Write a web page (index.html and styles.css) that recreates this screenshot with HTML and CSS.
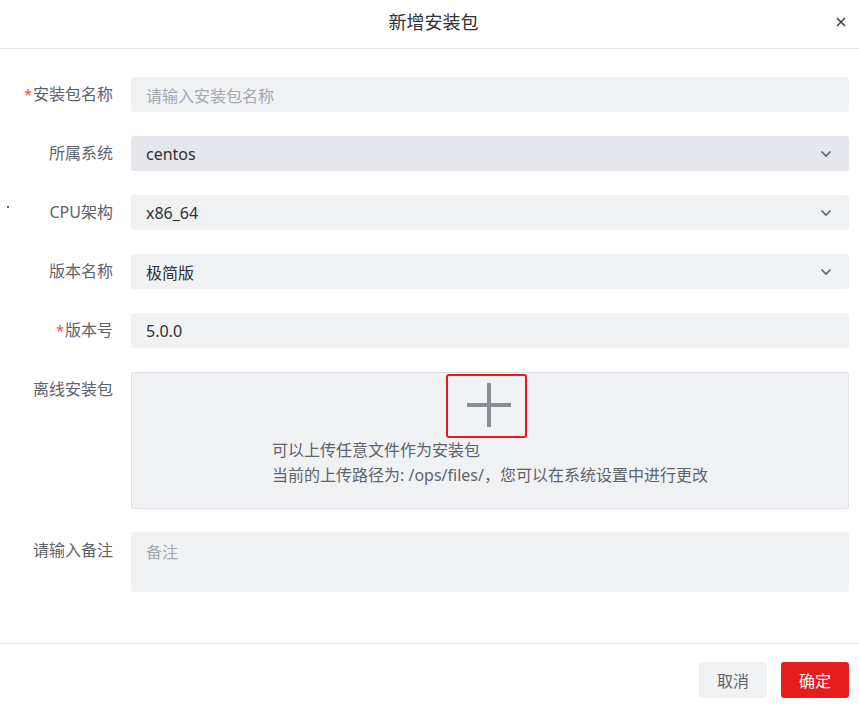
FILE: index.html
```html
<!DOCTYPE html>
<html lang="zh">
<head>
<meta charset="utf-8">
<link rel="stylesheet" href="styles.css">
</head>
<body>
<div class="dialog">
  <div class="header">
    <div class="title">新增安装包</div>
    <button class="close" aria-label="关闭">
      <svg width="10" height="10" viewBox="0 0 10 10"><path d="M1 1L9 9M9 1L1 9" stroke="#3a3d44" stroke-width="1.5" fill="none"/></svg>
    </button>
  </div>
  <div class="body">
    <span class="stray-dot"></span>
    <div class="row">
      <label class="label"><span class="req">*</span>安装包名称</label>
      <div class="field placeholder">请输入安装包名称</div>
    </div>
    <div class="row">
      <label class="label">所属系统</label>
      <div class="field select active">centos<svg class="chev" width="12" height="8" viewBox="0 0 12 8"><path d="M1.5 1.5L6 6L10.5 1.5" stroke="#5b6270" stroke-width="1.6" fill="none"/></svg></div>
    </div>
    <div class="row">
      <label class="label">CPU架构</label>
      <div class="field select">x86_64<svg class="chev" width="12" height="8" viewBox="0 0 12 8"><path d="M1.5 1.5L6 6L10.5 1.5" stroke="#5b6270" stroke-width="1.6" fill="none"/></svg></div>
    </div>
    <div class="row">
      <label class="label">版本名称</label>
      <div class="field select">极简版<svg class="chev" width="12" height="8" viewBox="0 0 12 8"><path d="M1.5 1.5L6 6L10.5 1.5" stroke="#5b6270" stroke-width="1.6" fill="none"/></svg></div>
    </div>
    <div class="row">
      <label class="label"><span class="req">*</span>版本号</label>
      <div class="field">5.0.0</div>
    </div>
    <div class="row row-upload">
      <label class="label">离线安装包</label>
      <div class="upload">
        <div class="plus-box">
          <svg width="46" height="46" viewBox="0 0 46 46"><path d="M23 1V45M1 23H45" stroke="#868e9a" stroke-width="4" fill="none"/></svg>
        </div>
        <div class="tip">
          <div>可以上传任意文件作为安装包</div>
          <div>当前的上传路径为: /ops/files/，您可以在系统设置中进行更改</div>
        </div>
      </div>
    </div>
    <div class="row row-remark">
      <label class="label">请输入备注</label>
      <div class="field textarea placeholder">备注</div>
    </div>
  </div>
  <div class="footer">
    <button class="btn btn-cancel">取消</button>
    <button class="btn btn-ok">确定</button>
  </div>
</div>
</body>
</html>
```

FILE: styles.css
```css
* { box-sizing: border-box; }
html, body {
  margin: 0;
  padding: 0;
  background: #ffffff;
}
body {
  font-family: "Noto Sans", "Noto Sans CJK SC", sans-serif;
  color: #303133;
  width: 859px;
  height: 710px;
  overflow: hidden;
}
.dialog {
  width: 859px;
  height: 710px;
  display: flex;
  flex-direction: column;
}
.header {
  height: 49px;
  border-bottom: 1px solid #e8e9ee;
  display: flex;
  align-items: center;
  justify-content: center;
  position: relative;
}
.title {
  font-size: 18px;
  color: #303133;
  margin-top: -7px;
  margin-left: 8px;
}
.close {
  position: absolute;
  right: 12px;
  top: 16px;
  width: 12px;
  height: 12px;
  padding: 0;
  border: 0;
  background: transparent;
  display: flex;
  align-items: center;
  justify-content: center;
}
.body {
  flex: 1;
  padding: 28px 10px 0 0;
  position: relative;
}
.stray-dot {
  position: absolute;
  left: 7px;
  top: 157px;
  width: 2px;
  height: 2px;
  background: #222;
  border-radius: 1px;
}
.row {
  display: grid;
  grid-template-columns: 113px 1fr;
  column-gap: 18px;
  margin-bottom: 24px;
}
.label {
  font-size: 16px;
  color: #5f636b;
  text-align: right;
  line-height: 35px;
  white-space: nowrap;
}
.req {
  color: #f04646;
  font-size: 14px;
  margin-right: 1px;
}
.field {
  height: 35px;
  background: #f1f2f4;
  border-radius: 3px;
  padding: 0 15px;
  display: flex;
  align-items: center;
  font-size: 16px;
  color: #303133;
}
.field.placeholder {
  color: #a4a8b0;
}
.select {
  justify-content: space-between;
}
.select.active {
  background: #e6e7ec;
}
.chev {
  margin-right: 2px;
}
.row-upload {
  margin-bottom: 23px;
}
.upload {
  height: 137px;
  border: 1px solid #dfe1e6;
  border-radius: 2px;
  background: #f1f2f4;
  display: flex;
  flex-direction: column;
  align-items: center;
  padding-top: 1px;
}
.plus-box {
  width: 81px;
  height: 64px;
  border: 2px solid #f0141e;
  border-radius: 3px;
  display: flex;
  align-items: center;
  justify-content: center;
  margin-right: 7px;
}
.plus-box svg {
  margin-right: -4px;
  margin-top: -3px;
}
.tip {
  font-size: 16px;
  line-height: 25px;
  color: #5f636b;
  text-align: left;
}
.row-remark .label {
  line-height: 37px;
}
.textarea {
  height: 60px;
  align-items: flex-start;
  padding-top: 7px;
}
.footer {
  height: 67px;
  border-top: 1px solid #e8e9ee;
  display: flex;
  justify-content: flex-end;
  align-items: flex-start;
  gap: 14px;
  padding: 18px 10px 0 0;
}
.btn {
  height: 36px;
  border: 0;
  border-radius: 3px;
  font-family: "Noto Sans CJK SC", sans-serif;
  font-size: 16px;
  padding: 0;
}
.btn-cancel {
  width: 68px;
  background: #f1f2f4;
  color: #5f636b;
}
.btn-ok {
  width: 68px;
  background: #e41d1d;
  color: #ffffff;
}
```
